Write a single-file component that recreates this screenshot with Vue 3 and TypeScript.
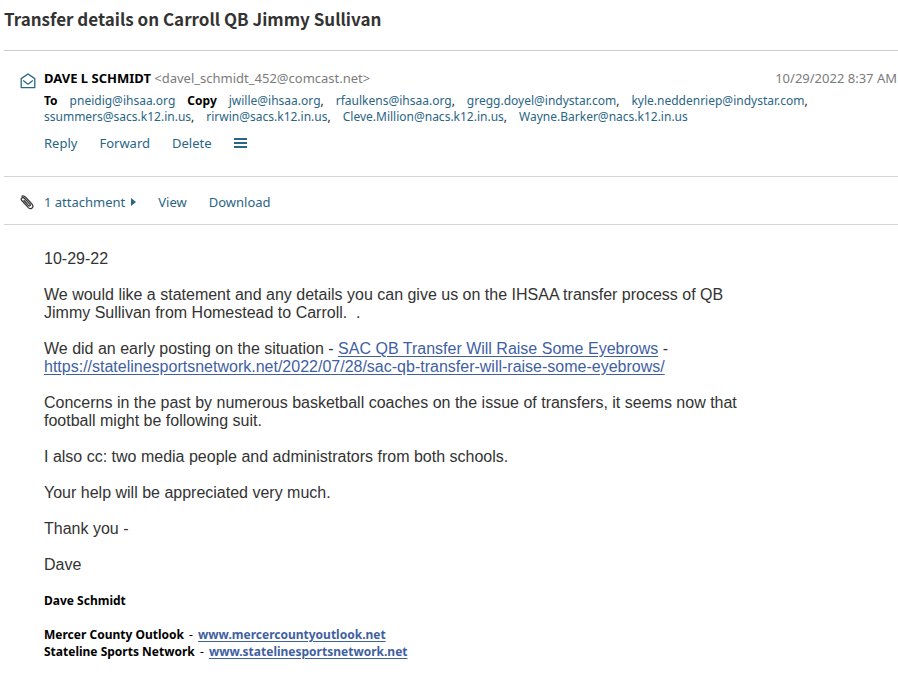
<script setup lang="ts">
interface Recipient {
  address: string
}

const copied: Recipient[] = [
  { address: 'jwille@ihsaa.org' },
  { address: 'rfaulkens@ihsaa.org' },
  { address: 'gregg.doyel@indystar.com' },
  { address: 'kyle.neddenriep@indystar.com' },
  { address: 'ssummers@sacs.k12.in.us' },
  { address: 'rirwin@sacs.k12.in.us' },
  { address: 'Cleve.Million@nacs.k12.in.us' },
  { address: 'Wayne.Barker@nacs.k12.in.us' },
]

const article = 'https://statelinesportsnetwork.net/2022/07/28/sac-qb-transfer-will-raise-some-eyebrows/'
</script>

<template>
  <main class="message">
    <h1 class="subject">Transfer details on Carroll QB Jimmy Sullivan</h1>

    <header class="envelope">
      <svg class="mail-icon" width="16" height="16" viewBox="0 0 16 16" aria-hidden="true">
        <path d="M1.2 5.600 8 1 14.800 5.600V14.600H1.200Z" />
        <path d="M3.200 7.600 8 11.200 12.800 7.600" />
      </svg>
      <div class="details">
        <div class="from-row">
          <div><strong class="sender">DAVE L SCHMIDT</strong> <span class="muted">&lt;davel_schmidt_452@comcast.net&gt;</span></div>
          <time class="muted" datetime="2022-10-29T08:37">10/29/2022 8:37 AM</time>
        </div>
        <div class="recipients">
          <strong class="label">To</strong>
          <a href="mailto:pneidig@ihsaa.org">pneidig@ihsaa.org</a>
          <strong class="label">Copy</strong>
          <span v-for="(person, i) in copied" :key="person.address"><a :href="'mailto:' + person.address">{{ person.address }}</a><template v-if="i < copied.length - 1">,</template></span>
        </div>
        <div class="actions">
          <button type="button">Reply</button>
          <button type="button">Forward</button>
          <button type="button">Delete</button>
          <button type="button" class="menu" aria-label="More actions">
            <svg width="13" height="12" viewBox="0 0 13 12" aria-hidden="true">
              <path d="M0 1h13v2H0zM0 5h13v2H0zM0 9h13v2H0z" />
            </svg>
          </button>
        </div>
      </div>
    </header>

    <section class="attachments">
      <svg class="clip-icon" width="16" height="16" viewBox="0 0 16 16" aria-hidden="true">
        <path d="M5 6.500 9.600 11.600C10.600 12.700 11.900 11.500 11 10.400L5.400 4.200C3.700 2.400 1.200 4.600 2.800 6.500L9.300 13.600C11.900 16.200 15.400 13 13.100 10.300L6.600 3.100C5.500 1.900 4.200 1.500 3 2.100" />
      </svg>
      <button type="button" class="count">
        1 attachment
        <svg width="5" height="8" viewBox="0 0 5 8" aria-hidden="true"><path d="M0 0 5 4 0 8Z" /></svg>
      </button>
      <button type="button">View</button>
      <button type="button">Download</button>
    </section>

    <article class="body">
      <p>10-29-22</p>
      <p>We would like a statement and any details you can give us on the IHSAA transfer process of QB Jimmy Sullivan from Homestead to Carroll.&nbsp; .</p>
      <p>We did an early posting on the situation - <a :href="article">SAC QB Transfer Will Raise Some Eyebrows</a> - <a :href="article">{{ article }}</a></p>
      <p>Concerns in the past by numerous basketball coaches on the issue of transfers, it seems now that football might be following suit.</p>
      <p>I also cc: two media people and administrators from both schools.</p>
      <p>Your help will be appreciated very much.</p>
      <p>Thank you -</p>
      <p>Dave</p>
      <footer class="signature">
        <p>Dave Schmidt</p>
        <p>
          Mercer County Outlook <span class="dash">-</span> <a href="http://www.mercercountyoutlook.net">www.mercercountyoutlook.net</a><br>
          Stateline Sports Network <span class="dash">-</span> <a href="http://www.statelinesportsnetwork.net">www.statelinesportsnetwork.net</a>
        </p>
      </footer>
    </article>
  </main>
</template>

<style>
body {
  background: #fff;
}
</style>

<style scoped>
.message {
  padding-left: 4px;
  color: #333;
  font: 13px/16px "Noto Sans", "Open Sans", sans-serif;
}

.subject {
  margin: 0;
  padding: 7px 0 19px;
  border-bottom: 1px solid #ccc;
  font: bold 17px/24px "Noto Sans CJK SC", "Noto Sans", sans-serif;
}

.envelope {
  display: flex;
  gap: 8px;
  padding: 19px 0 25px 16px;
  border-bottom: 1px solid #d4d4d4;
}

.mail-icon {
  flex: none;
  margin-top: 3px;
  fill: none;
  stroke: #2a6584;
  stroke-width: 1.3;
  stroke-linejoin: round;
}

.details {
  flex: 1;
}

.from-row {
  display: flex;
  justify-content: space-between;
  padding-right: 1px;
}

.muted {
  color: #7b7b7b;
}

.sender,
.label {
  color: #000;
}

.recipients {
  display: flex;
  flex-wrap: wrap;
  column-gap: 12px;
  max-width: 810px;
  margin-top: 7px;
  color: #222;
  font-size: 12px;
}

.recipients a,
button {
  color: #2a6584;
  text-decoration: none;
}

button {
  padding: 0;
  border: 0;
  background: none;
  font: inherit;
}

.actions {
  display: flex;
  align-items: center;
  gap: 22px;
  margin-top: 10px;
}

.menu svg,
.count svg {
  display: block;
  fill: #2a6584;
}

.attachments {
  display: flex;
  align-items: center;
  gap: 22px;
  padding: 17px 0 14px 15px;
  border-bottom: 1px solid #d4d4d4;
}

.clip-icon {
  margin-right: -13px;
  fill: none;
  stroke: #3a3a3a;
  stroke-width: 1.3;
  stroke-linecap: round;
}

.count {
  display: flex;
  align-items: center;
  gap: 6px;
}

.body {
  max-width: 700px;
  padding: 25px 0 14px 40px;
  font: 16px/18px "Liberation Sans", Arial, sans-serif;
}

.body p {
  margin: 0 0 18px;
}

.body a {
  color: #3f5fa3;
  text-underline-offset: 2px;
}

.signature {
  color: #000;
  font: bold 12px/17px "Noto Sans", "Open Sans", sans-serif;
}

.body .signature p {
  margin-bottom: 17px;
}

.dash {
  margin: 0 2px;
  font-weight: normal;
}
</style>
